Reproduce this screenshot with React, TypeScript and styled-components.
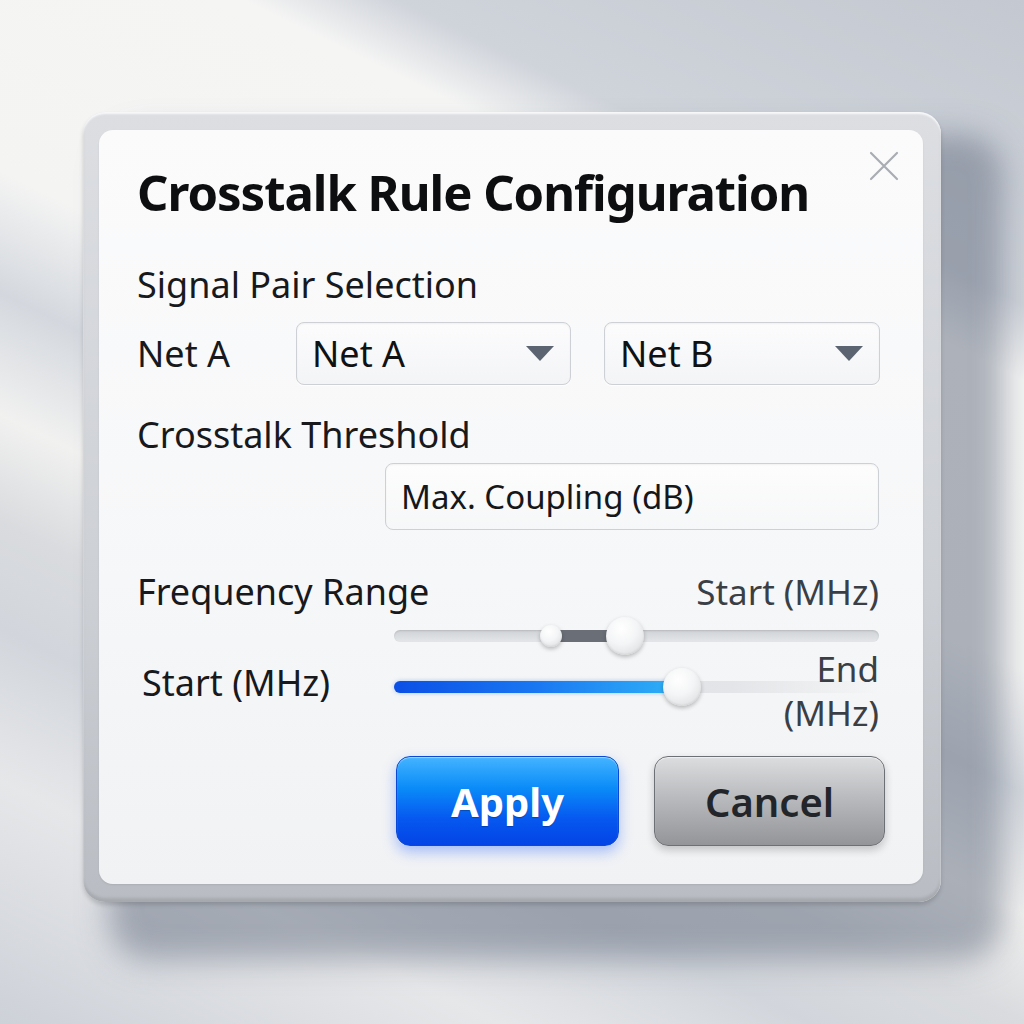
import React from 'react';
import styled, {createGlobalStyle} from 'styled-components';

const GlobalStyle = createGlobalStyle`
  html, body {
    margin: 0;
    padding: 0;
  }
  body {
    font-family: "Noto Sans", "Open Sans", sans-serif;
    background: #e9ebee;
  }
`;

const Page = styled.div`
  width: 1024px;
  height: 1024px;
  display: flex;
  align-items: flex-start;
  justify-content: center;
  padding-top: 112px;
  box-sizing: border-box;
  overflow: hidden;
  background: linear-gradient(26deg,
    #cdd1d8 0%, #e6e7e9 16%, #d2d6dc 26%, #d9dbde 33%, #f1f1f0 40%,
    #d4d8de 48%, #f4f4f3 56%, #f5f5f4 75%, #cfd3da 80%, #c4c9d1 100%);
`;

const Frame = styled.div`
  width: 858px;
  height: 790px;
  box-sizing: border-box;
  padding: 18px 18px 18px 16px;
  border-radius: 22px;
  background: linear-gradient(180deg, #dcdee2 0%, #cdd0d5 60%, #b9bdc3 100%);
  box-shadow:
    inset 0 2px 2px rgba(255,255,255,0.8),
    inset 0 -4px 3px rgba(0,0,0,0.1),
    0 3px 4px rgba(0,0,0,0.15),
    44px 40px 30px 18px rgba(100,110,128,0.5);
`;

const Panel = styled.div`
  position: relative;
  height: 100%;
  box-sizing: border-box;
  padding: 34px 44px 0 38px;
  border-radius: 14px;
  background: linear-gradient(180deg, #fbfbfc 0%, #f6f7f8 60%, #f1f2f4 100%);
  box-shadow: 0 1px 2px rgba(0,0,0,0.08);
`;

const Title = styled.h1`
  margin: 0;
  font-size: 49px;
  font-weight: 700;
  color: #0d0e10;
  line-height: 56px;
  letter-spacing: -1px;
`;

const Close = styled.button`
  position: absolute;
  top: 19px;
  right: 22px;
  width: 34px;
  height: 34px;
  border: none;
  background: transparent;
  padding: 0;
  cursor: pointer;
`;

const SectionLabel = styled.div<{ $mt: number }>`
  margin-top: ${p => p.$mt}px;
  font-size: 36px;
  line-height: 40px;
  color: #17191c;
`;

const NetRow = styled.div`
  margin-top: 17px;
  display: grid;
  grid-template-columns: 126px 275px 276px;
  column-gap: 33px;
  align-items: center;
`;

const RowLabel = styled.div`
  font-size: 36px;
  color: #17191c;
`;

const Select = styled.div`
  height: 63px;
  box-sizing: border-box;
  display: flex;
  align-items: center;
  justify-content: space-between;
  padding: 0 16px 0 15px;
  border: 1.5px solid #cdd0d5;
  border-radius: 8px;
  background: linear-gradient(180deg, #fcfcfd 0%, #f3f4f6 100%);
  box-shadow: inset 0 1px 2px rgba(0,0,0,0.05), 0 1px 1px rgba(255,255,255,0.9);
  font-size: 36px;
  color: #101113;
`;

const Caret = styled.span`
  width: 0;
  height: 0;
  border-left: 14px solid transparent;
  border-right: 14px solid transparent;
  border-top: 15px solid #5b6470;
`;

const InputRow = styled.div`
  margin-top: 8px;
  padding-left: 248px;
`;

const TextInput = styled.div`
  height: 67px;
  box-sizing: border-box;
  display: flex;
  align-items: center;
  padding-left: 15px;
  border: 1.5px solid #cdd0d5;
  border-radius: 8px;
  background: linear-gradient(180deg, #fdfdfd 0%, #f6f7f8 100%);
  box-shadow: inset 0 1px 2px rgba(0,0,0,0.05);
  font-size: 33px;
  color: #15171a;
`;

const FreqHeader = styled.div`
  margin-top: 37px;
  display: flex;
  justify-content: space-between;
  align-items: center;
`;

const FreqLabel = styled.div`
  font-size: 36px;
  color: #17191c;
`;

const SubLabel = styled.div`
  font-size: 35px;
  color: #3a3f46;
  text-align: right;
  line-height: 44px;
`;

const SliderRow = styled.div<{ $mt: number }>`
  margin-top: ${p => p.$mt}px;
  display: grid;
  grid-template-columns: 257px 1fr;
  align-items: center;
`;

const Track = styled.div`
  position: relative;
  height: 12px;
  border-radius: 6px;
  background: linear-gradient(180deg, #cfd2d6 0%, #e4e6e9 100%);
  box-shadow: inset 0 1px 2px rgba(0,0,0,0.12);
`;

const FadeTrack = styled(Track)`
  background: linear-gradient(90deg, #d9dcdf 0%, #e3e5e8 70%, rgba(229,231,234,0) 100%);
  box-shadow: none;
`;

const Segment = styled.div`
  position: absolute;
  top: 0;
  bottom: 0;
  background: #6a6f77;
`;

const BlueFill = styled.div`
  position: absolute;
  top: 0;
  bottom: 0;
  left: 0;
  border-radius: 6px;
  background: linear-gradient(90deg, #0b4fe6 0%, #1a78f2 50%, #2fb2f7 100%);
  box-shadow: 0 0 4px rgba(20,110,240,0.35);
`;

const Knob = styled.div<{ $size: number }>`
  position: absolute;
  top: 50%;
  width: ${p => p.$size}px;
  height: ${p => p.$size}px;
  border-radius: 50%;
  transform: translate(-50%, -50%);
  background: radial-gradient(circle at 40% 30%, #ffffff 0%, #f4f5f6 45%, #d6d8db 100%);
  box-shadow: 0 2px 4px rgba(0,0,0,0.25), inset 0 -1px 2px rgba(0,0,0,0.08);
`;

const SliderWrap = styled.div`
  position: relative;
`;

const EndLabel = styled(SubLabel)`
  position: absolute;
  right: 0;
  top: -34px;
`;

const StartLabel = styled.div`
  font-size: 36px;
  color: #17191c;
  padding: 0 0 8px 5px;
`;

const Buttons = styled.div`
  margin: 41px -6px 0 0;
  display: flex;
  justify-content: flex-end;
  gap: 35px;
`;

const Button = styled.button<{ $primary?: boolean }>`
  width: ${p => (p.$primary ? 223 : 231)}px;
  height: 90px;
  border-radius: 14px;
  font-family: "Noto Sans", "Open Sans", sans-serif;
  font-size: 40px;
  font-weight: ${p => (p.$primary ? 700 : 600)};
  cursor: pointer;
  color: ${p => (p.$primary ? '#ffffff' : '#22252a')};
  border: 1.5px solid ${p => (p.$primary ? '#0a49d6' : '#6d7075')};
  background: ${p => (p.$primary
    ? 'linear-gradient(180deg, #44b4ff 0%, #0a8cf8 35%, #0658f0 70%, #0444e6 100%)'
    : 'linear-gradient(180deg, #dcdddf 0%, #b9bbbe 45%, #939599 100%)')};
  box-shadow: ${p => (p.$primary
    ? '0 6px 14px rgba(20,90,255,0.35), inset 0 1px 1px rgba(255,255,255,0.5)'
    : '0 4px 8px rgba(0,0,0,0.2), inset 0 1px 1px rgba(255,255,255,0.6)')};
  text-shadow: ${p => (p.$primary ? '0 1px 1px rgba(0,0,0,0.25)' : 'none')};
`;

const App = () => {
  return (
    <>
      <GlobalStyle/>
      <Page>
        <Frame>
          <Panel>
            <Title>Crosstalk Rule Configuration</Title>
            <Close aria-label="Close">
              <svg width="34" height="34" viewBox="0 0 34 34">
                <path d="M4 4 L30 30 M30 4 L4 30" stroke="#a9adb3" strokeWidth="2.2" strokeLinecap="round"/>
              </svg>
            </Close>

            <SectionLabel $mt={45}>Signal Pair Selection</SectionLabel>
            <NetRow>
              <RowLabel>Net A</RowLabel>
              <Select>Net A<Caret/></Select>
              <Select>Net B<Caret/></Select>
            </NetRow>

            <SectionLabel $mt={30}>Crosstalk Threshold</SectionLabel>
            <InputRow>
              <TextInput>Max. Coupling (dB)</TextInput>
            </InputRow>

            <FreqHeader>
              <FreqLabel>Frequency Range</FreqLabel>
              <SubLabel>Start (MHz)</SubLabel>
            </FreqHeader>

            <SliderRow $mt={14}>
              <div/>
              <Track>
                <Segment style={{left: '32.4%', width: '15.2%'}}/>
                <Knob $size={22} style={{left: '32.4%'}}/>
                <Knob $size={38} style={{left: '47.6%'}}/>
              </Track>
            </SliderRow>

            <SliderRow $mt={16}>
              <StartLabel>Start (MHz)</StartLabel>
              <SliderWrap>
                <FadeTrack>
                  <BlueFill style={{width: '59.4%'}}/>
                  <Knob $size={38} style={{left: '59.4%'}}/>
                </FadeTrack>
                <EndLabel>End<br/>(MHz)</EndLabel>
              </SliderWrap>
            </SliderRow>

            <Buttons>
              <Button $primary>Apply</Button>
              <Button>Cancel</Button>
            </Buttons>
          </Panel>
        </Frame>
      </Page>
    </>
  );
};

export default App;
